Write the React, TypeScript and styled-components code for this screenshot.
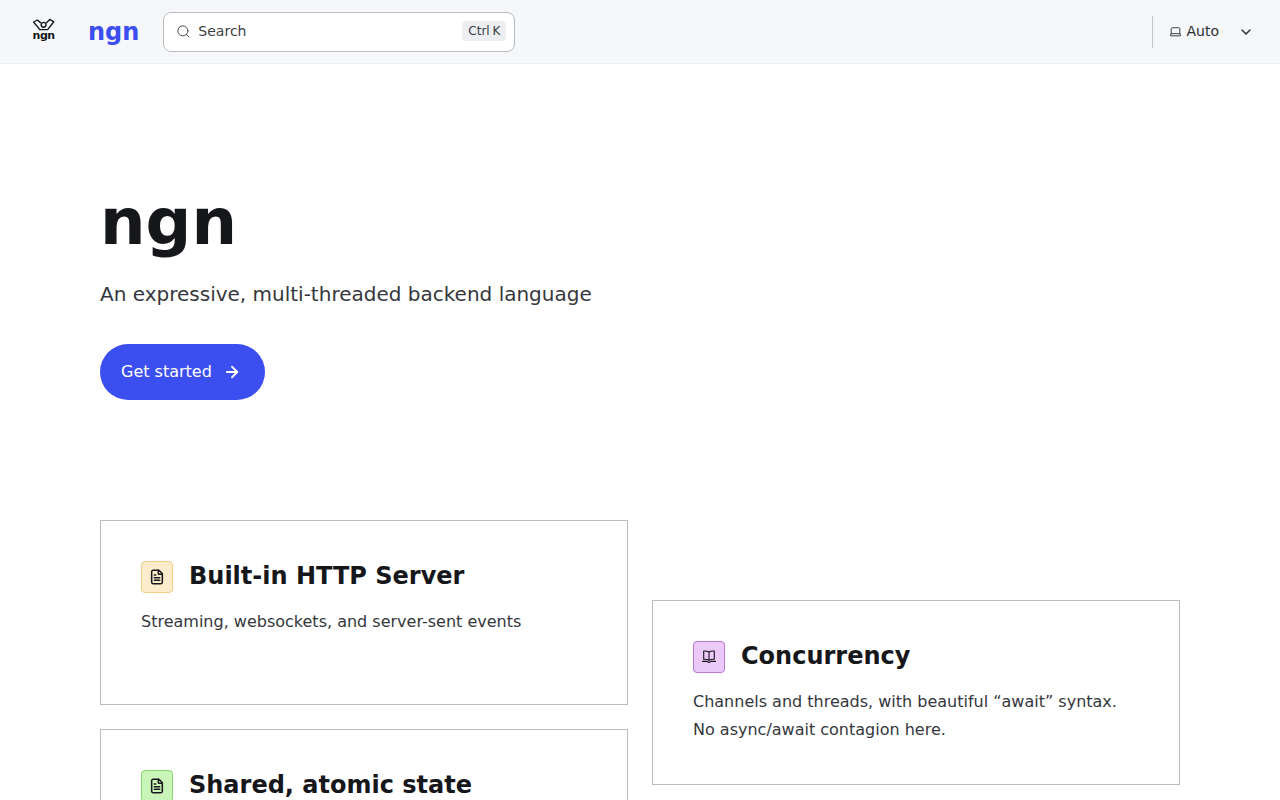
import React from "react";
import styled, { createGlobalStyle } from "styled-components";
import { Search, ArrowRight, ChevronDown, Laptop, FileText } from "lucide-react";

const Global = createGlobalStyle`
  html, body { margin: 0; padding: 0; background: #fff; }
  body { font-family: "DejaVu Sans", sans-serif; color: #16171a; }
  * { box-sizing: border-box; }
`;

const Header = styled.header`
  height: 64px;
  background: #f6f7f9;
  border-bottom: 1px solid #eceef1;
  display: flex;
  align-items: center;
  padding: 0 24px;
`;
const LogoMark = styled.svg`
  width: 40px;
  height: 40px;
  display: block;
  flex: none;
`;
const LogoWord = styled.text`
  font-family: "DejaVu Sans", sans-serif;
  font-weight: 700;
  font-size: 11px;
  letter-spacing: -0.5px;
  fill: #16171a;
`;
const Brand = styled.a`
  color: #3b4ef0;
  font-size: 24px;
  font-weight: 700;
  margin-left: 24px;
  line-height: 40px;
`;
const SearchBox = styled.div`
  margin-left: 24px;
  width: 352px;
  height: 40px;
  background: #fff;
  border: 1px solid #b9bcc1;
  border-radius: 8px;
  display: flex;
  align-items: center;
  padding: 0 8px 0 12px;
  color: #3c3f44;
  font-size: 14px;
`;
const SearchLabel = styled.span`
  margin-left: 7px;
  padding-bottom: 2px;
  flex: 1;
`;
const Kbd = styled.kbd`
  font-family: "DejaVu Sans", sans-serif;
  background: #eceef1;
  border-radius: 4px;
  font-size: 12px;
  padding: 2px 6px;
  margin-bottom: 2px;
  line-height: 16px;
  word-spacing: -1px;
  color: #3c3f44;
`;
const HeaderEnd = styled.div`
  margin-left: auto;
  display: flex;
  align-items: center;
  height: 32px;
  border-left: 1px solid #c4c6ca;
  padding: 0 2px 0 16px;
  font-size: 14px;
  color: #2c2e33;
`;
const ThemeLabel = styled.span`
  margin-left: 4px;
  margin-right: 19px;
  padding-bottom: 2px;
`;
const Main = styled.main`
  padding: 0 100px;
`;
const Hero = styled.section`
  padding-top: 120px;
  height: 456px;
`;
const Title = styled.h1`
  margin: 0;
  font-size: 64px;
  line-height: 76px;
  font-weight: 700;
  color: #16171a;
`;
const Subtitle = styled.p`
  margin: 20px 0 0;
  font-size: 20px;
  line-height: 28px;
  color: #35373c;
`;
const CTA = styled.a`
  margin-top: 36px;
  display: inline-flex;
  align-items: center;
  height: 56px;
  padding: 0 24px 0 21px;
  border-radius: 28px;
  background: #3b4ef0;
  color: #fff;
  font-size: 16px;
  gap: 11px;
`;
const CTALabel = styled.span`
  padding-bottom: 2px;
`;
const Columns = styled.section`
  display: grid;
  grid-template-columns: 1fr 1fr;
  gap: 24px;
`;
const Column = styled.div<{ $offset?: number }>`
  display: flex;
  flex-direction: column;
  gap: 24px;
  padding-top: ${(p) => p.$offset ?? 0}px;
`;
const Card = styled.article`
  height: 185px;
  border: 1px solid #b9bcc1;
  padding: 40px;
`;
const CardHead = styled.div`
  display: flex;
  align-items: center;
  gap: 16px;
  height: 32px;
`;
const IconTile = styled.span<{ $bg: string; $line: string }>`
  width: 32px;
  height: 32px;
  border-radius: 4px;
  background: ${(p) => p.$bg};
  border: 1px solid ${(p) => p.$line};
  display: flex;
  align-items: center;
  justify-content: center;
  color: #16171a;
  flex: none;
`;
const CardTitle = styled.h2`
  margin: 0;
  font-size: 24px;
  line-height: 30px;
  padding-bottom: 2px;
  font-weight: 700;
`;
const CardText = styled.p`
  margin: 15px 0 0;
  font-size: 16px;
  line-height: 28px;
  color: #35373c;
`;
const GlyphIcon = styled.svg`
  width: 16px;
  height: 16px;
  display: block;
`;

const BookGlyph = () => (
  <GlyphIcon viewBox="0 0 16 16" fill="none" stroke="currentColor" strokeWidth="1.1" strokeLinejoin="round" strokeLinecap="round" aria-hidden="true">
    <path d="M8 3 C6.6 2.2 4.6 2 2.7 2.1 V10.3 C4.6 10.2 6.6 10.4 8 11.2 C9.4 10.4 11.4 10.2 13.3 10.3 V2.1 C11.4 2 9.4 2.2 8 3 Z" />
    <path d="M8 3 V11.2" />
    <path d="M1.5 12.4 H6.2 L8 13.4 L9.8 12.4 H14.5" />
  </GlyphIcon>
);

export default function App() {
  return (
    <>
      <Global />
      <Header>
        <LogoMark viewBox="0 0 40 40" fill="none" aria-hidden="true">
          <g stroke="#16171a" strokeWidth="1.4" strokeLinejoin="round" strokeLinecap="round">
            <path d="M16.4 10.6 L13.4 8 L9.6 10 L15.8 17.6 H23.6 L29.8 9.8 L25.8 7.4 L22.8 10.6" />
            <circle cx="19.6" cy="12.8" r="2.4" />
          </g>
          <LogoWord x="19.6" y="27" textAnchor="middle">ngn</LogoWord>
        </LogoMark>
        <Brand>ngn</Brand>
        <SearchBox>
          <Search size={15} strokeWidth={1.5} />
          <SearchLabel>Search</SearchLabel>
          <Kbd>Ctrl K</Kbd>
        </SearchBox>
        <HeaderEnd>
          <Laptop size={13} strokeWidth={1.7} />
          <ThemeLabel>Auto</ThemeLabel>
          <ChevronDown size={16} strokeWidth={2.2} />
        </HeaderEnd>
      </Header>
      <Main>
        <Hero>
          <Title>ngn</Title>
          <Subtitle>An expressive, multi-threaded backend language</Subtitle>
          <CTA>
            <CTALabel>Get started</CTALabel>
            <ArrowRight size={18} strokeWidth={2.4} />
          </CTA>
        </Hero>
        <Columns>
          <Column>
            <Card>
              <CardHead>
                <IconTile $bg="#fdeccb" $line="#f1cf86"><FileText size={16} strokeWidth={2.3} /></IconTile>
                <CardTitle>Built-in HTTP Server</CardTitle>
              </CardHead>
              <CardText>Streaming, websockets, and server-sent events</CardText>
            </Card>
            <Card>
              <CardHead>
                <IconTile $bg="#c9f5b8" $line="#84d96c"><FileText size={16} strokeWidth={2.3} /></IconTile>
                <CardTitle>Shared, atomic state</CardTitle>
              </CardHead>
            </Card>
          </Column>
          <Column $offset={80}>
            <Card>
              <CardHead>
                <IconTile $bg="#ebc9f8" $line="#b878d8"><BookGlyph /></IconTile>
                <CardTitle>Concurrency</CardTitle>
              </CardHead>
              <CardText>
                Channels and threads, with beautiful “await” syntax.
                <br />
                No async/await contagion here.
              </CardText>
            </Card>
          </Column>
        </Columns>
      </Main>
    </>
  );
}
